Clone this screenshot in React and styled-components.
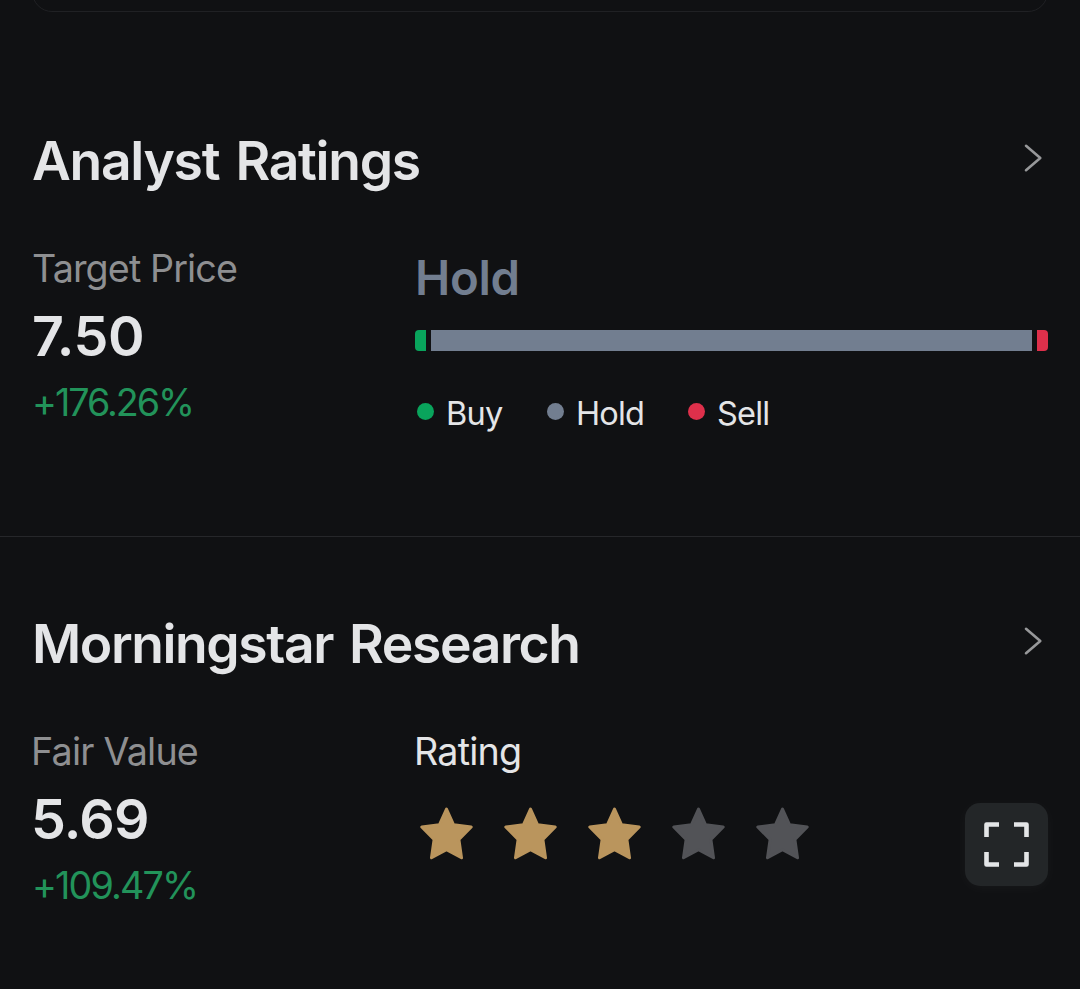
import React from 'react';
import styled, { createGlobalStyle } from 'styled-components';

const GlobalStyle = createGlobalStyle`
body {
  margin: 0;
  background: #101113;
}
* {
  box-sizing: border-box;
}
`;

const Page = styled.div`
position: relative;
width: 1080px;
height: 989px;
overflow: hidden;
background: #101113;
color: #e4e5e7;
font-family: Inter, "Liberation Sans", sans-serif;
`;

const CardEdge = styled.div`
height: 12px;
margin: 0 32px;
overflow: hidden;
display: flex;
align-items: flex-end;
`;

const CardBottom = styled.div`
flex: 1;
height: 60px;
border: 1px solid #202124;
border-radius: 20px;
`;

const Section = styled.section`
height: ${(props) => props.$height}px;
padding: ${(props) => props.$top}px 32px 0 33px;
border-bottom: ${(props) => (props.$divided ? '1px solid #26272a' : 'none')};
`;

const Header = styled.div`
display: flex;
justify-content: space-between;
height: 64px;
margin-bottom: 53px;
`;

const Title = styled.h2`
margin: 0;
margin-left: ${(props) => props.$shift || 0}px;
font-size: 53.4px;
font-weight: 600;
line-height: 64px;
letter-spacing: ${(props) => props.$spacing}px;
word-spacing: 4px;
white-space: nowrap;
`;

const ChevronIcon = styled.svg`
width: 20px;
height: 30px;
margin: 14px 5px 0 0;
fill: none;
stroke: #97989a;
stroke-width: 2.6;
stroke-linecap: round;
stroke-linejoin: round;
`;

const Columns = styled.div`
display: grid;
grid-template-columns: 382px 1fr;
`;

const Column = styled.div`
display: flex;
flex-direction: column;
align-items: flex-start;
`;

const Label = styled.div`
margin-left: ${(props) => props.$shift || 0}px;
font-size: 37.7px;
font-weight: 400;
line-height: 45px;
letter-spacing: ${(props) => props.$spacing}px;
color: ${(props) => (props.$bright ? '#e4e5e7' : '#8e8f91')};
`;

const Value = styled.div`
margin: 13px 0 12px ${(props) => props.$shift}px;
font-size: 55.5px;
font-weight: 600;
line-height: 64px;
letter-spacing: ${(props) => props.$spacing}px;
`;

const Change = styled.div`
margin-left: -1px;
font-size: 37.7px;
font-weight: 400;
line-height: 44px;
letter-spacing: ${(props) => props.$spacing}px;
color: #22935a;
`;

const Consensus = styled.div`
margin: 4px 0 24px;
font-size: 47.3px;
font-weight: 600;
line-height: 56px;
letter-spacing: -.3px;
color: #727e90;
`;

const RatingBar = styled.div`
display: flex;
gap: 5px;
width: 633px;
height: 21px;
border-radius: 4px;
overflow: hidden;
`;

const Segment = styled.div`
flex: ${(props) => props.$share} 0 0;
background: ${(props) => props.$color};
`;

const Legend = styled.div`
display: flex;
align-items: center;
margin-top: 43px;
padding-left: 2px;
`;

const LegendItem = styled.div`
display: flex;
align-items: center;
gap: 12px;
width: ${(props) => props.$width}px;
font-size: 32.5px;
font-weight: 400;
line-height: 40px;
letter-spacing: -.8px;
`;

const Dot = styled.span`
width: 17px;
height: 17px;
margin-bottom: 6px;
border-radius: 50%;
background: ${(props) => props.$color};
`;

const Stars = styled.div`
display: flex;
gap: 31px;
margin: 32.5px 0 0 5px;
`;

const StarIcon = styled.svg`
width: 53px;
height: 53px;
fill: ${(props) => (props.$filled ? '#ba955d' : '#525357')};
stroke: ${(props) => (props.$filled ? '#ba955d' : '#525357')};
stroke-width: 3;
stroke-linejoin: round;
`;

const ExpandButton = styled.button`
position: absolute;
left: 965px;
top: 803px;
width: 83px;
height: 83px;
padding: 0;
border: 0;
border-radius: 15px;
background: #232628;
box-shadow: 0 2px 14px rgba(255, 255, 255, .035);
display: flex;
align-items: center;
justify-content: center;
`;

const ExpandIcon = styled.svg`
width: 45px;
height: 45px;
fill: none;
stroke: #e3e5e7;
stroke-width: 4.6;
stroke-linejoin: round;
`;

const Chevron = () => (
  <ChevronIcon viewBox="0 0 20 30">
    <path d="M3 2.8 17.3 15 3 27.2" />
  </ChevronIcon>
);

const Star = ({ filled }) => (
  <StarIcon viewBox="0 0 53 53" $filled={filled}>
    <path d="M26.5 2 33.6 17.8 51.2 20 38.9 32.4 41.5 50.8 26.5 42.8 11.5 50.8 14.1 32.4 1.8 20 19.4 17.8Z" />
  </StarIcon>
);

const ratings = [
  { name: 'Buy', share: 11, color: '#09a45c', width: 130 },
  { name: 'Hold', share: 601, color: '#727e90', width: 141 },
  { name: 'Sell', share: 11, color: '#de304b', width: 90 },
];

const App = () => (
  <Page>
    <GlobalStyle />
    <CardEdge><CardBottom /></CardEdge>
    <Section $height={525} $top={117} $divided>
      <Header>
        <Title $spacing={-1.28} $shift={-1}>Analyst Ratings</Title>
        <Chevron />
      </Header>
      <Columns>
        <Column>
          <Label $spacing={-0.9} $shift={-1}>Target Price</Label>
          <Value $spacing={-0.36} $shift={-1}>7.50</Value>
          <Change $spacing={-2.03}>+176.26%</Change>
        </Column>
        <Column>
          <Consensus>Hold</Consensus>
          <RatingBar>
            {ratings.map((r) => <Segment key={r.name} $share={r.share} $color={r.color} />)}
          </RatingBar>
          <Legend>
            {ratings.map((r) => (
              <LegendItem key={r.name} $width={r.width}>
                <Dot $color={r.color} />
                {r.name}
              </LegendItem>
            ))}
          </Legend>
        </Column>
      </Columns>
    </Section>
    <Section $height={452} $top={75}>
      <Header>
        <Title $spacing={-1.4} $shift={-1}>Morningstar Research</Title>
        <Chevron />
      </Header>
      <Columns>
        <Column>
          <Label $spacing={-0.8} $shift={-2}>Fair Value</Label>
          <Value $spacing={-0.72} $shift={-2}>5.69</Value>
          <Change $spacing={-1.84}>+109.47%</Change>
        </Column>
        <Column>
          <Label $spacing={-0.8} $shift={-1} $bright>Rating</Label>
          <Stars>
            {[1, 2, 3, 4, 5].map((n) => <Star key={n} filled={n <= 3} />)}
          </Stars>
        </Column>
      </Columns>
    </Section>
    <ExpandButton aria-label="Expand">
      <ExpandIcon viewBox="0 0 45 45">
        <path d="M2.5 15V2.5H15M30 2.5H42.5V15M42.5 30V42.5H30M15 42.5H2.5V30" />
      </ExpandIcon>
    </ExpandButton>
  </Page>
);

export default App;
